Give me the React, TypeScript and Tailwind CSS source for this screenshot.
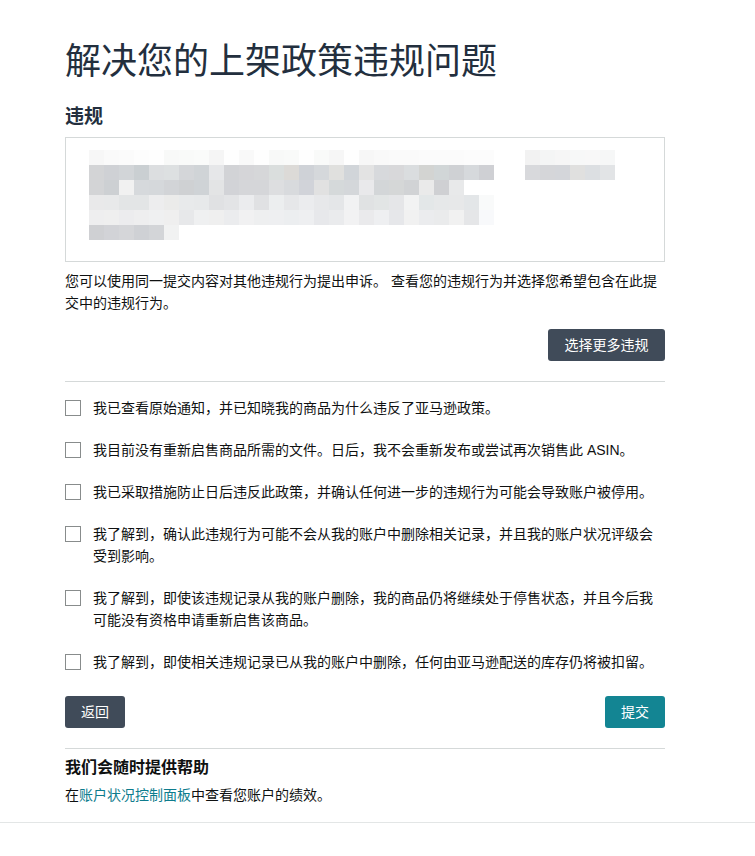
import React from "react";

const FONT = "font-['Liberation_Sans','Noto_Sans_CJK_SC',sans-serif]";

// pixelated (redacted) violation text
const blurRows: string[][] = [
  ["#f7f7f7", "#fafafa", "#fbfbfb", "#fdfdfd", "#fefefe", "#f8f9f8", "#f9faf9", "#fafbfa", "#f5f5f5", "#fefefe", "#f9f9f9", "#fefefe", "#f8f9f8", "#f9faf9", "#fefefe", "#f9faf9", "#f6f6f6", "#fefefe", "#f7f7f7", "#f9f9f9", "#fafafa", "#fafafa", "#fbfbfb", "#fbfbfb", "#fbfbfb", "#fcfcfc", "#fcfcfc"],
  ["#d3d4d6", "#cfd1d5", "#d2d5d8", "#cacfd2", "#dcdee0", "#dde0e1", "#d4d6d9", "#d0d4d7", "#e6e7e9", "#d2d3d6", "#d5d5d8", "#d6d7d9", "#dadedd", "#dcdad7", "#cfd2d7", "#d5d8db", "#e0e0de", "#d1d5d9", "#e3e3e3", "#d7d9dc", "#d8d8da", "#dadddf", "#d3d4d2", "#d1d6d7", "#cfd1d4", "#d6d9dc", "#cfd0d4"],
  ["#d3d4d6", "#cdd0d3", "#f1f1f1", "#d6d9dc", "#d5d8db", "#d2d4d7", "#cfd1d3", "#cfd3d6", "#e3e4e5", "#d2d3d7", "#d5d6d9", "#d5d6d9", "#dddee0", "#d8dadd", "#d1d3d9", "#e1e1e1", "#d5d9da", "#d4d7da", "#e9e9eb", "#d3d6d8", "#d5d7d7", "#d1d3d5", "#eaeaea", "#cfd0d3", "#e8e9ea"],
  ["#e9e9ea", "#e8e9ea", "#e3e5e6", "#e3e5e6", "#ededee", "#ebebea", "#e8eaeb", "#e7e9ea", "#e0e1e3", "#e3e4e6", "#ebecee", "#e0e1e3", "#eceeef", "#e6e7e9", "#ebecee", "#e7e8ea", "#e4e6e8", "#f1f2f3", "#e0e2e3", "#e2e5e5", "#e5e6e8", "#f2f3f3", "#e3e7e8", "#e6e8e9", "#e7e8e9", "#e3e6e8", "#f9fafa"],
  ["#eeeeef", "#efefef", "#ececee", "#eeeeef", "#eff0f1", "#efefef", "#e7e8ea", "#eff0f1", "#efefef", "#ebecee", "#f1f1f2", "#eeeff0", "#eeeff1", "#eceef0", "#eeeff1", "#e7e8eb", "#eaebed", "#f2f2f3", "#eaeaec", "#eeeff1", "#e6e7ea", "#f1f1f1", "#ebecee", "#eaebec", "#f1f1f1", "#e5e6e8", "#f8f9fb"],
  ["#cfd0d3", "#d2d3d7", "#d5d6d9", "#cfd1d5", "#d3d5d8", "#f1f2f2"],
];

const blurSide: string[][] = [
  ["#f2f2f2", "#f4f5f5", "#f6f6f6", "#f7f8f8", "#f8f8f8", "#f6f7f7"],
  ["#d8d9dc", "#d5d6d9", "#d4d6da", "#e0e0df", "#dcdfe2", "#e2e4e6"],
];

const checks = [
  "我已查看原始通知，并已知晓我的商品为什么违反了亚马逊政策。",
  "我目前没有重新启售商品所需的文件。日后，我不会重新发布或尝试再次销售此 ASIN。",
  "我已采取措施防止日后违反此政策，并确认任何进一步的违规行为可能会导致账户被停用。",
  "我了解到，确认此违规行为可能不会从我的账户中删除相关记录，并且我的账户状况评级会受到影响。",
  "我了解到，即使该违规记录从我的账户删除，我的商品仍将继续处于停售状态，并且今后我可能没有资格申请重新启售该商品。",
  "我了解到，即使相关违规记录已从我的账户中删除，任何由亚马逊配送的库存仍将被扣留。",
];

function BlurBlock({ rows }: { rows: string[][] }) {
  return (
    <div className="flex flex-col">
      {rows.map((row, i) => (
        <div key={i} className="flex h-[15px]">
          {row.map((c, j) => (
            <div key={j} className="h-[15px] w-[15px]" style={{ backgroundColor: c }} />
          ))}
        </div>
      ))}
    </div>
  );
}

export default function App() {
  return (
    <div className={`min-h-[856px] w-full bg-white text-[#0f1111] ${FONT}`}>
      <div className="ml-[65px] w-[600px] pt-[40px]">
        <h1 className="text-[36px] leading-[44px] font-normal text-[#232f3e]">
          解决您的上架政策违规问题
        </h1>

        <h3 className="mt-[21px] text-[19px] leading-[24px] font-bold text-[#232f3e]">违规</h3>

        <div className="mt-[8px] h-[125px] border border-[#d5d9d9] pl-[23px] pt-[12px]">
          <div className="flex gap-[31px]">
            <BlurBlock rows={blurRows} />
            <BlurBlock rows={blurSide} />
          </div>
        </div>

        <p className="mt-[8px] text-[14px] leading-[22px]">
          您可以使用同一提交内容对其他违规行为提出申诉。 查看您的违规行为并选择您希望包含在此提交中的违规行为。
        </p>

        <div className="mt-[15px] flex justify-end">
          <button className="h-[32px] w-[117px] rounded-[3px] bg-[#404b59] text-[14px] text-white">
            选择更多违规
          </button>
        </div>

        <div className="mt-[20px] h-px bg-[#d5d9d9]" />

        <div className="mt-[15px] flex flex-col gap-[20px]">
          {checks.map((t) => (
            <label key={t} className="flex items-start gap-[12px] cursor-pointer">
              <span className="mt-[3px] h-[16px] w-[16px] shrink-0 border border-[#888c8c] bg-white" />
              <span className="text-[14px] leading-[22px]">{t}</span>
            </label>
          ))}
        </div>

        <div className="mt-[23px] flex justify-between">
          <button className="h-[32px] w-[60px] rounded-[3px] bg-[#404b59] text-[14px] text-white">
            返回
          </button>
          <button className="h-[32px] w-[60px] rounded-[3px] bg-[#138593] text-[14px] text-white">
            提交
          </button>
        </div>

        <div className="mt-[20px] h-px bg-[#d5d9d9]" />

        <h4 className="mt-[7px] text-[16px] leading-[24px] font-bold">我们会随时提供帮助</h4>
        <p className="mt-[4px] text-[14px] leading-[22px]">
          在<a className="text-[#0e7c8d]">账户状况控制面板</a>中查看您账户的绩效。
        </p>
      </div>
      <div className="mt-[16px] h-px w-full bg-[#e3e6e6]" />
    </div>
  );
}
